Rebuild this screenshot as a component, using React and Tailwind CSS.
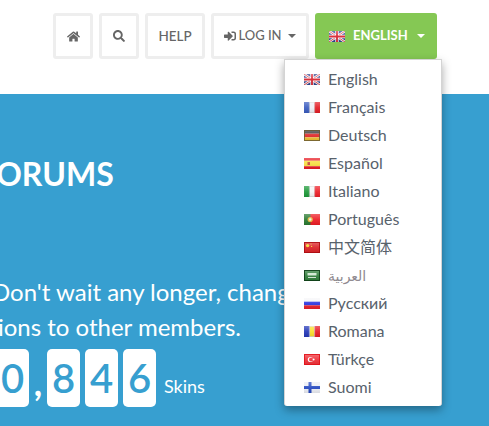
import React from "react";
import { FaHome, FaSearch, FaSignInAlt } from "react-icons/fa";

const F = ({ children, edge }) => (
  <svg width="16" height="11" viewBox="0 0 16 11" className="block shrink-0">
    {children}
    <rect x="0" y="0" width="16" height="11" fill="url(#gloss)" />
    {edge && <rect x="0.5" y="0.5" width="15" height="10" fill="none" stroke={edge} strokeOpacity="0.85" />}
  </svg>
);
const UK = () => (
  <F>
    <rect width="16" height="11" fill="#34468f" />
    <path d="M0 0L16 11M16 0L0 11" stroke="#fff" strokeWidth="2.4" />
    <path d="M0 0L16 11M16 0L0 11" stroke="#d8353f" strokeWidth="0.9" />
    <path d="M8 0V11M0 5.5H16" stroke="#fff" strokeWidth="3.4" />
    <path d="M8 0V11M0 5.5H16" stroke="#d8202c" strokeWidth="1.8" />
  </F>
);
const V3 = ({ a, b, c }) => (
  <F>
    <rect width="5.4" height="11" fill={a} />
    <rect x="5.4" width="5.2" height="11" fill={b} />
    <rect x="10.6" width="5.4" height="11" fill={c} />
    <rect x="0.5" y="0.5" width="4.9" height="10" fill="none" stroke={a} />
    <rect x="10.6" y="0.5" width="4.9" height="10" fill="none" stroke={c} />
    <rect x="5.4" y="0.5" width="5.2" height="10" fill="none" stroke="#d8d8d8" strokeOpacity="0.7" />
  </F>
);
const H3 = ({ a, b, c, mid = 3.67, edge, children }) => (
  <F edge={edge}>
    <rect width="16" height={mid} fill={a} />
    <rect y={mid} width="16" height={11 - 2 * mid} fill={b} />
    <rect y={11 - mid} width="16" height={mid} fill={c} />
    {children}
  </F>
);

const flags = [
  ["English", <UK />],
  ["Français", <V3 a="#3a5cc0" b="#eef0f6" c="#e41c24" />],
  ["Deutsch", <H3 a="#3a3a3a" b="#e02828" c="#f0c030" edge="#6b5a30" />],
  ["Español", <H3 a="#e81c24" b="#f6e040" c="#e81c24" mid={2.75}><rect x="3.5" y="4" width="2.5" height="3" fill="#c8483a" /></H3>],
  ["Italiano", <V3 a="#1f9a3a" b="#f6f6f6" c="#ee2028" />],
  ["Português", <F><rect width="16" height="11" fill="#ee1c24" /><rect width="6.4" height="11" fill="#2a7a30" /><circle cx="6.2" cy="5.5" r="2.6" fill="#e8b83a" /><circle cx="6.2" cy="5.5" r="1.2" fill="#e8f0f0" /></F>],
  ["中文简体", <F edge="#a80c10"><rect width="16" height="11" fill="#dc2226" /><circle cx="3.6" cy="3.6" r="1.7" fill="#f6d82a" /><circle cx="7" cy="2" r="0.6" fill="#f6d82a" /><circle cx="7.6" cy="4.4" r="0.6" fill="#f6d82a" /></F>],
  [<span className="text-[14px] text-[#8f8a90]" style={{ fontFamily: "'Liberation Serif', 'DejaVu Sans', serif" }}>العربية</span>, <F edge="#0c3a14"><rect width="16" height="11" fill="#2f7d3a" /><rect x="3.5" y="3" width="9" height="2.5" fill="#cfe6d0" /><rect x="4" y="7" width="8" height="0.9" fill="#e8f2e8" /></F>],
  ["Русский", <H3 a="#f6f6f8" b="#2a35e0" c="#e8202a" />],
  ["Romana", <V3 a="#2438b8" b="#fbe02a" c="#e81c24" />],
  ["Türkçe", <F edge="#e01018"><rect width="16" height="11" fill="#f03038" /><circle cx="6.4" cy="5.5" r="2.6" fill="#fff" /><circle cx="7.1" cy="5.5" r="2.1" fill="#f03038" /><circle cx="9.6" cy="5.5" r="1" fill="#fff" /></F>],
  ["Suomi", <F><rect width="16" height="11" fill="#eceef4" /><rect x="4.5" width="3" height="11" fill="#2448c0" /><rect y="4" width="16" height="3" fill="#2448c0" /></F>],
];

const btn = "h-[46px] flex items-center justify-center border-[3px] border-[#eeeeee] rounded-[3px] text-[#666666] bg-white";
const Digit = ({ d }) => (
  <span className="w-[33px] h-[58px] bg-white rounded-[5px] flex items-center justify-center text-[#379fd0] text-[40px] leading-none font-semibold">{d}</span>
);

export default function App() {
  return (
    <div className="relative w-[489px] h-[426px] overflow-hidden bg-white" style={{ fontFamily: "Lato, 'Noto Sans CJK SC', sans-serif" }}>
      <svg width="0" height="0" className="absolute">
        <defs>
          <linearGradient id="gloss" x1="0" y1="0" x2="0" y2="1">
            <stop offset="0" stopColor="#fff" stopOpacity="0.3" />
            <stop offset="0.5" stopColor="#fff" stopOpacity="0.08" />
            <stop offset="1" stopColor="#000" stopOpacity="0.08" />
          </linearGradient>
        </defs>
      </svg>
      <header className="h-[94px] pt-[13px] pl-[53px] flex items-start gap-[6px]">
        <div className={`${btn} w-[40px]`}><FaHome size={13} /></div>
        <div className={`${btn} w-[40px]`}><FaSearch size={12} /></div>
        <div className={`${btn} w-[60px] text-[13.5px] font-medium`}>HELP</div>
        <div className={`${btn} w-[98px] text-[13px] font-medium`}>
          <FaSignInAlt size={12} className="mr-[2px]" />
          <span>LOG IN</span>
          <span className="ml-[6px] w-0 h-0 border-x-[4px] border-x-transparent border-t-[4px] border-t-[#666666]" />
        </div>
        <div className="h-[46px] w-[122px] pl-[14px] flex items-center rounded-[3px] bg-[#85c854] text-white">
          <UK />
          <span className="ml-[8px] text-[13px] font-bold">ENGLISH</span>
          <span className="ml-[9px] w-0 h-0 border-x-[4px] border-x-transparent border-t-[4px] border-t-white" />
        </div>
      </header>
      <main className="h-[332px] bg-[#379fd0] text-white whitespace-nowrap relative overflow-hidden">
        <h1 className="ml-[-22px] mt-[62px] text-[32px] leading-[36px] font-bold">FORUMS</h1>
        <div className="mt-[82px] ml-[-8px] text-[24px] leading-[36px]">Don't wait any longer, change</div>
        <div className="ml-[-38px] mt-[-1px] text-[24px] leading-[36px]">options to other members.</div>
        <div className="mt-[4px] ml-[-4px] flex items-center">
          <Digit d="0" />
          <span className="w-[18px] h-[58px] text-[36px] leading-[66px] text-center font-bold">,</span>
          <div className="flex gap-[5px]">
            <Digit d="8" />
            <Digit d="4" />
            <Digit d="6" />
          </div>
          <span className="ml-[8px] text-[18px] mt-[16px]">Skins</span>
        </div>
      </main>
      <div className="absolute left-[284px] top-[59px] w-[158px] h-[347px] bg-white border border-[#d4d4d4] border-b-0 rounded-b-[3px] pt-[5px] shadow-[0_4px_10px_rgba(0,0,0,0.35)]">
        {flags.map(([name, flag], i) => (
          <div key={i} className="h-[28px] pl-[19px] flex items-center gap-[8px] text-[16px] text-[#58626c]">
            {flag}
            <span>{name}</span>
          </div>
        ))}
      </div>
    </div>
  );
}
